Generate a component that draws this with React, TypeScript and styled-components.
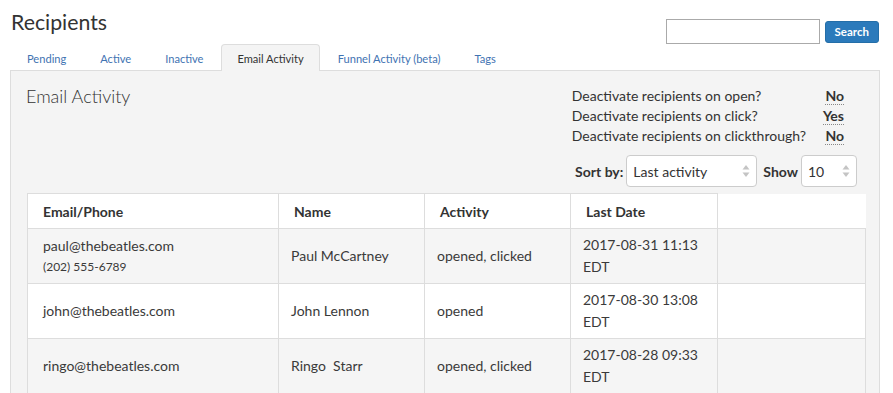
import React from "react";
import styled, { createGlobalStyle } from "styled-components";

const GlobalStyle = createGlobalStyle`
  body {
    margin: 0;
    background: #fff;
    font-family: Lato, "Open Sans", Arial, sans-serif;
    color: #333;
  }
  * { box-sizing: border-box; }
`;

const Page = styled.div`
  width: 893px;
  height: 393px;
  overflow: hidden;
`;

const Header = styled.div`
  display: flex;
  justify-content: space-between;
  align-items: flex-start;
  padding: 8px 14px 0 11px;
  height: 44px;
`;

const Title = styled.h1`
  margin: 0;
  font-size: 21.3px;
  font-weight: 400;
  line-height: 28px;
  color: #333;
`;

const SearchForm = styled.form`
  display: flex;
  align-items: center;
  gap: 5px;
  margin-top: 11px;
`;

const SearchInput = styled.input`
  width: 154px;
  height: 25px;
  border: 1px solid #aaa;
  padding: 2px 6px;
  font-family: inherit;
`;

const SearchButton = styled.button`
  height: 22px;
  padding: 0 9px;
  border: 1px solid #246ea8;
  border-radius: 3px;
  background: #2b7abb;
  color: #fff;
  font-family: inherit;
  font-weight: 700;
  font-size: 11.5px;
`;

const Tabs = styled.ul`
  display: flex;
  list-style: none;
  margin: 0;
  padding: 0 0 0 11px;
  height: 26px;
`;

const Tab = styled.li<{ $active?: boolean }>`
  display: flex;
  align-items: center;
  padding: 0 15px;
  margin-right: 2px;
  font-size: 11.1px;
  color: ${(p) => (p.$active ? "#333" : "#3f73b2")};
  background: ${(p) => (p.$active ? "#f4f4f4" : "transparent")};
  border: 1px solid ${(p) => (p.$active ? "#ddd" : "transparent")};
  border-bottom: none;
  border-radius: 4px 4px 0 0;
  position: relative;
  z-index: 1;
  margin-bottom: -1px;
  height: 27px;
`;

const Panel = styled.div`
  margin: 0 13px 0 10px;
  background: #f4f4f4;
  border: 1px solid #ddd;
  padding: 0 15px 40px 16px;
`;

const PanelTop = styled.div`
  display: flex;
  justify-content: space-between;
  align-items: flex-start;
`;

const PanelTitle = styled.h2`
  margin: 14px 0 0;
  font-size: 18px;
  font-weight: 300;
  line-height: 22px;
  color: #333;
  margin-left: -1px;
`;

const Controls = styled.div`
  display: flex;
  flex-direction: column;
  align-items: flex-end;
  padding-top: 15px;
`;

const Settings = styled.div`
  display: grid;
  grid-template-columns: auto 38px;
  margin-right: 20px;
  font-size: 14px;
  line-height: 20px;
`;

const SettingLabel = styled.span`
  color: #333;
`;

const SettingValue = styled.span`
  justify-self: end;
  font-weight: 700;
  line-height: 16px;
  margin-top: 2px;
  height: 17px;
  border-bottom: 1px dotted #888;
`;

const SortRow = styled.div`
  display: flex;
  align-items: center;
  margin-top: 9px;
  margin-right: 7px;
  font-size: 14px;
`;

const SortLabel = styled.span`
  font-weight: 700;
  margin-right: 3px;
`;

const SelectBox = styled.div<{ $width: number }>`
  display: flex;
  align-items: center;
  justify-content: space-between;
  width: ${(p) => p.$width}px;
  height: 32px;
  padding: 0 6px;
  background: #fff;
  border: 1px solid #ccc;
  border-radius: 4px;
  font-size: 14px;
  & + span {
    margin-left: 6px;
  }
`;

const Table = styled.table`
  margin-top: 6px;
  width: 838px;
  border-collapse: collapse;
  table-layout: fixed;
  font-size: 14px;
`;

const Th = styled.th<{ $blank?: boolean }>`
  height: 35px;
  text-align: left;
  font-weight: 700;
  padding: 0 15px;
  background: #fff;
  border: 1px solid #ddd;
  border-top: ${(p) => (p.$blank ? "none" : "1px solid #ddd")};
  border-right: ${(p) => (p.$blank ? "none" : "1px solid #ddd")};
`;

const Tr = styled.tr<{ $striped?: boolean }>`
  background: ${(p) => (p.$striped ? "#f5f5f5" : "#fff")};
`;

const Td = styled.td<{ $first?: boolean }>`
  height: 55px;
  padding: 0 10px 0 ${(p) => (p.$first ? 15 : 12)}px;
  border: 1px solid #ddd;
  color: #3a3a3a;
  vertical-align: middle;
  line-height: 20px;
  white-space: pre;
`;

const Phone = styled.div`
  font-size: 12px;
  margin-top: 1px;
`;

const DateLine = styled.div`
  line-height: 22px;
`;

function Arrows() {
  return (
    <svg width="8" height="14" viewBox="0 0 8 14">
      <path d="M4 1 L7.5 5.5 H0.5 Z" fill="#c4c4c4" />
      <path d="M4 13 L7.5 8.5 H0.5 Z" fill="#c4c4c4" />
    </svg>
  );
}

const rows = [
  {
    email: "paul@thebeatles.com",
    phone: "(202) 555-6789",
    name: "Paul McCartney",
    activity: "opened, clicked",
    date: "2017-08-31 11:13",
  },
  {
    email: "john@thebeatles.com",
    name: "John Lennon",
    activity: "opened",
    date: "2017-08-30 13:08",
  },
  {
    email: "ringo@thebeatles.com",
    name: "Ringo  Starr",
    activity: "opened, clicked",
    date: "2017-08-28 09:33",
  },
];

const tabs = ["Pending", "Active", "Inactive", "Email Activity", "Funnel Activity (beta)", "Tags"];

export default function App() {
  return (
    <Page>
      <GlobalStyle />
      <Header>
        <Title>Recipients</Title>
        <SearchForm onSubmit={(e) => e.preventDefault()}>
          <SearchInput />
          <SearchButton>Search</SearchButton>
        </SearchForm>
      </Header>
      <Tabs>
        {tabs.map((t) => (
          <Tab key={t} $active={t === "Email Activity"}>
            {t}
          </Tab>
        ))}
      </Tabs>
      <Panel>
        <PanelTop>
          <PanelTitle>Email Activity</PanelTitle>
          <Controls>
            <Settings>
              <SettingLabel>Deactivate recipients on open?</SettingLabel>
              <SettingValue>No</SettingValue>
              <SettingLabel>Deactivate recipients on click?</SettingLabel>
              <SettingValue>Yes</SettingValue>
              <SettingLabel>Deactivate recipients on clickthrough?</SettingLabel>
              <SettingValue>No</SettingValue>
            </Settings>
            <SortRow>
              <SortLabel>Sort by:</SortLabel>
              <SelectBox $width={131}>
                Last activity
                <Arrows />
              </SelectBox>
              <SortLabel>Show</SortLabel>
              <SelectBox $width={56}>
                10
                <Arrows />
              </SelectBox>
            </SortRow>
          </Controls>
        </PanelTop>
        <Table>
          <colgroup>
            <col style={{ width: 251 }} />
            <col style={{ width: 146 }} />
            <col style={{ width: 146 }} />
            <col style={{ width: 147 }} />
            <col style={{ width: 148 }} />
          </colgroup>
          <thead>
            <tr>
              <Th>Email/Phone</Th>
              <Th>Name</Th>
              <Th>Activity</Th>
              <Th>Last Date</Th>
              <Th $blank />
            </tr>
          </thead>
          <tbody>
            {rows.map((r, i) => (
              <Tr key={r.email} $striped={i % 2 === 0}>
                <Td $first>
                  {r.email}
                  {r.phone && <Phone>{r.phone}</Phone>}
                </Td>
                <Td>{r.name}</Td>
                <Td>{r.activity}</Td>
                <Td>
                  <DateLine>{r.date}</DateLine>
                  <DateLine>EDT</DateLine>
                </Td>
                <Td />
              </Tr>
            ))}
          </tbody>
        </Table>
      </Panel>
    </Page>
  );
}
